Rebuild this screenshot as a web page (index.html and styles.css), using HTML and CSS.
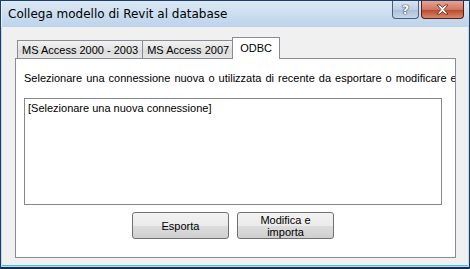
FILE: index.html
```html
<!DOCTYPE html>
<html>
    <head>
        <title>Collega modello di Revit al database</title>
        <link rel="stylesheet" href="styles.css">
    </head>
    <body>
        <div id="window">
            <div id="titlebar">
                <span id="title">Collega modello di Revit al database</span>
                <div id="captions">
                    <div class="cap help">?</div>
                    <div class="cap close">
                        <svg width="15" height="11" viewBox="0 0 15 11">
                            <path d="M2 1 L5 1 L7.5 3.5 L10 1 L13 1 L9 5.5 L13 10 L10 10 L7.5 7.5 L5 10 L2 10 L6 5.5 Z" fill="#fff" stroke="#6b1e12" stroke-width="0.8"/>
                        </svg>
                    </div>
                </div>
            </div>
            <div id="client">
                <div id="tabs">
                    <div class="tab">MS Access 2000 - 2003</div>
                    <div class="tab">MS Access 2007</div>
                    <div class="tab active">ODBC</div>
                </div>
                <div id="panel">
                    <div id="hint">Selezionare una connessione nuova o utilizzata di recente da esportare o modificare e</div>
                    <div id="list">
                        <div class="item">[Selezionare una nuova connessione]</div>
                    </div>
                    <div id="buttons">
                        <button class="btn">Esporta</button>
                        <button class="btn">Modifica e<br>importa</button>
                    </div>
                </div>
            </div>
        </div>
    </body>
</html>
```

FILE: styles.css
```css
body {
    margin: 0;
    padding: 0;
    font-family: "Liberation Sans", Arial, sans-serif;
    font-size: 11px;
}

#window {
    width: 470px;
    height: 269px;
    box-sizing: border-box;
    border: 1px solid #1b3f66;
    border-bottom: 2px solid #13304e;
    background: #c4d8ec;
    display: flex;
    flex-direction: column;
    overflow: hidden;
}

#titlebar {
    height: 26px;
    display: flex;
    align-items: flex-start;
    justify-content: space-between;
    background: linear-gradient(to bottom, #dce9f6, #bcd3ea);
    border-left: 1px solid #e6f0fa;
}

#title {
    font-family: "DejaVu Sans", sans-serif;
    font-size: 12px;
    color: #000;
    margin: 6px 0 0 6px;
}

#captions {
    display: flex;
    gap: 2px;
    margin-right: 5px;
}

.cap {
    height: 18px;
    border: 1px solid #4a5f7d;
    border-top: none;
    border-radius: 0 0 4px 4px;
    display: flex;
    align-items: center;
    justify-content: center;
    box-sizing: border-box;
}

.help {
    width: 27px;
    background: linear-gradient(to bottom, #d9e5f2, #bccfe4 50%, #a9bfd8 51%, #c5d7eb);
    color: #fff;
    font-family: "DejaVu Sans", sans-serif;
    font-weight: bold;
    font-size: 13px;
    text-shadow: 0 0 1px #2b3d58, 0 0 1px #2b3d58, 0 0 1px #2b3d58;
}

.close {
    width: 43px;
    border-color: #5a1b13;
    background: linear-gradient(to bottom, #e6a595, #d0765f 50%, #bb4428 51%, #d48a6c);
}

#client {
    flex: 1;
    margin: 0 1px 1px 1px;
    background: #f0f0f0;
    border-bottom: 1px solid #3ec0e4;
    padding: 9px 12px 7px 13px;
}

#tabs {
    display: flex;
    align-items: flex-end;
    height: 22px;
    padding-left: 2px;
}

.tab {
    height: 18px;
    box-sizing: border-box;
    border: 1px solid #898c95;
    border-bottom: none;
    background: linear-gradient(to bottom, #f2f2f2, #e3e3e3 50%, #d9d9d9 51%, #e6e6e6);
    padding: 3px 4px 0 4px;
    margin-right: -1px;
    color: #000;
}

.tab.active {
    height: 22px;
    background: #fff;
    padding: 4px 7px 0 7px;
    margin-left: -1px;
    margin-right: 0;
    position: relative;
    top: 1px;
    z-index: 1;
}

#panel {
    height: 200px;
    box-sizing: border-box;
    border: 1px solid #898c95;
    background: #fff;
    padding: 13px 0 0 8px;
}

#hint {
    white-space: nowrap;
    overflow: hidden;
    height: 14px;
    word-spacing: 1px;
}

#list {
    margin-top: 12px;
    width: 418px;
    height: 107px;
    box-sizing: border-box;
    border: 1px solid #828790;
    padding: 3px 3px;
}

#buttons {
    display: flex;
    gap: 8px;
    margin: 7px 0 0 108px;
}

.btn {
    width: 97px;
    height: 27px;
    border: 1px solid #707070;
    border-radius: 3px;
    background: linear-gradient(to bottom, #f2f2f2, #ebebeb 50%, #dddddd 51%, #cfcfcf);
    font-family: "Liberation Sans", Arial, sans-serif;
    font-size: 11px;
    line-height: 12px;
    padding: 0;
    color: #000;
}
```
